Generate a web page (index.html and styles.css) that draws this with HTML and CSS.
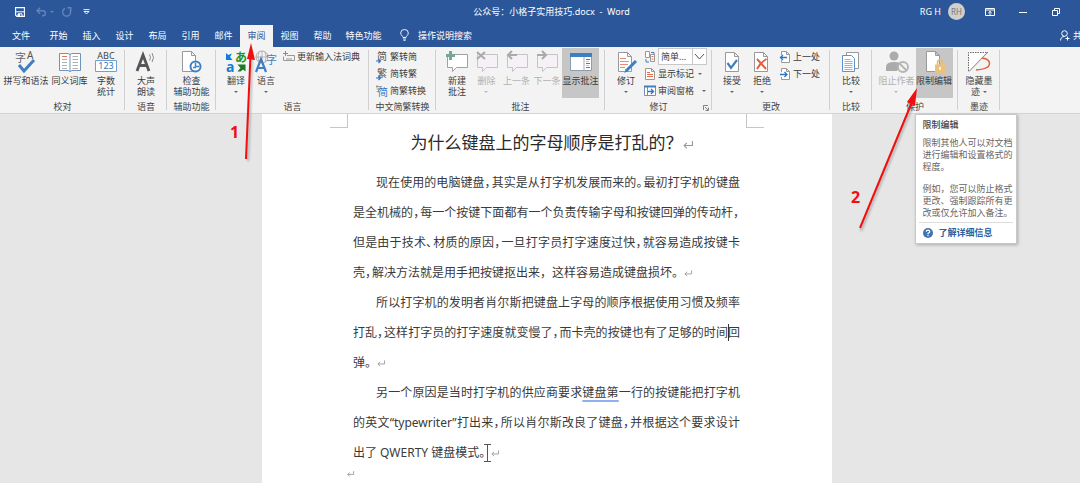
FILE: index.html
```html
<!DOCTYPE html>
<html lang="zh-CN">
<head>
<meta charset="utf-8">
<title>公众号：小格子实用技巧.docx - Word</title>
<link rel="stylesheet" href="styles.css">
</head>
<body>
<header class="titlebar">
  <div class="quick">
    <button class="plain q-save" aria-label="保存"><svg width="10" height="10" viewBox="0 0 10 10"><path d="M.6.6h8.8v8.8H2L.6 8.2z" fill="none" stroke="#fff" stroke-width="1.1"/><path d="M1 4.8h8M3 9.400V6.800h4v2.600" fill="none" stroke="#fff"/><path d="M3 7h2v2.500H3z" fill="#fff"/></svg></button>
    <button class="plain q-undo" aria-label="撤消"><svg width="18" height="10" viewBox="0 0 18 10"><path d="M4 .8 1 3.800l3 3M1.200 3.800H7c3.200 0 3.200 5 0 5H6" fill="none" stroke="#6583b8" stroke-width="1.400"/><path d="M14 4h4l-2 2z" fill="#6583b8"/></svg></button>
    <button class="plain q-redo" aria-label="恢复"><svg width="10" height="10" viewBox="0 0 10 10"><path d="M3 1.500a4 4 0 1 0 5 1.500M5.500.8h3.300v3.200" fill="none" stroke="#6583b8" stroke-width="1.400"/></svg></button>
    <button class="plain" aria-label="自定义快速访问工具栏"><svg width="7" height="6" viewBox="0 0 7 6"><path d="M.5.6h6M1 2.500h5L3.500 5z" fill="none" stroke="#fff" stroke-width=".9"/></svg></button>
  </div>
  <div class="doc-title">公众号：小格子实用技巧.docx&nbsp; -&nbsp; Word</div>
  <div class="window">
    <span class="user">RG H</span>
    <span class="avatar">RH</span>
    <button class="plain w-ribbon" aria-label="功能区显示选项"><svg width="10" height="8" viewBox="0 0 10 8"><path d="M.5.5h9v7h-9zM.5 2h9M5 7V3.600M3.300 5 5 3.400 6.700 5" fill="none" stroke="#fff"/></svg></button>
    <button class="plain w-min" aria-label="最小化"><svg width="8" height="8" viewBox="0 0 8 8"><path d="M0 4.500h8" stroke="#fff"/></svg></button>
    <button class="plain" aria-label="向下还原"><svg width="8" height="8" viewBox="0 0 8 8"><path d="M.5 2.500h5v5h-5zM2.500 2.500v-2h5v5h-2" fill="none" stroke="#fff"/></svg></button>
  </div>
</header>
<nav class="tabs">
  <button class="tab file">文件</button>
  <button class="tab">开始</button>
  <button class="tab">插入</button>
  <button class="tab">设计</button>
  <button class="tab">布局</button>
  <button class="tab">引用</button>
  <button class="tab">邮件</button>
  <button class="tab current">审阅</button>
  <button class="tab">视图</button>
  <button class="tab">帮助</button>
  <button class="tab wide">特色功能</button>
  <button class="tab search"><svg width="9" height="12" viewBox="0 0 9 12"><path d="M3 8.500C3 7 .7 6.300.7 4a3.800 3.500 0 0 1 7.600 0C8.300 6.300 6 7 6 8.500zM3 10h3M3.500 11.400h2" fill="none" stroke="#fff" stroke-width=".9"/></svg>操作说明搜索</button>
  <button class="tab share"><svg width="10" height="11" viewBox="0 0 10 11"><circle cx="4.500" cy="3.500" r="2.800" fill="none" stroke="#fff"/><path d="M.6 10.500C.6 8 2 6.500 4.300 6.500M7.500 6.500v4M5.500 8.500h4" fill="none" stroke="#fff"/></svg>共享</button>
</nav>

<section class="ribbon">
  <div class="group g-proof">
    <div class="tools">
      <button class="big w46"><svg width="22" height="22" viewBox="0 0 22 22"><text x="0" y="11" font-size="11" fill="#666">字</text><text x="12" y="8" font-size="10" fill="#555">A</text><path d="m4 14 5 6L19 9" fill="none" stroke="#3f7fc1" stroke-width="3"/></svg><span>拼写和语法</span></button>
      <button class="big w37"><svg width="22" height="22" viewBox="0 0 22 22"><path d="M.5 2.500H9l2 1 2-1h8.500v17H13l-2 1-2-1H.5z" fill="#fff" stroke="#6f93bd"/><path d="M11 3.500v17" stroke="#6f93bd"/><path d="M3 5.500h5" stroke="#e8765a"/><path d="M3 8.500h5M3 11.500h5M3 14.500h5M3 17.500h5M13.500 5.500H19M13.500 8.500H19M13.500 11.500H19M13.500 14.500H19M13.500 17.500H19" stroke="#b0b0b0"/></svg><span>同义词库</span></button>
      <button class="big w32"><svg width="22" height="22" viewBox="0 0 22 22"><text x="11" y="8" font-size="9" text-anchor="middle" fill="#444">ABC</text><path d="M.5 9.500h21v11H.5z" fill="#fff" stroke="#6fa0d4"/><text x="11" y="18" font-size="9" text-anchor="middle" fill="#2f75b5">123</text></svg><span>字数<br>统计</span></button>
    </div>
    <div class="caption">校对</div>
  </div>
  <div class="group g-speech">
    <div class="tools">
      <button class="big w36"><svg width="22" height="22" viewBox="0 0 22 22"><path d="M2 20 8 4l6 16M4.500 14.500h7" fill="none" stroke="#555" stroke-width="2.800"/><path d="M14.500 3.500q2 3 0 6M17 2q3 4.500 0 9" fill="none" stroke="#888"/></svg><span>大声<br>朗读</span></button>
    </div>
    <div class="caption">语音</div>
  </div>
  <div class="group g-access">
    <div class="tools">
      <button class="big w40"><svg width="22" height="22" viewBox="0 0 22 22"><path d="M1.500.5h9l4 4v16h-13zM10.500.5v4h4" fill="#fff" stroke="#999"/><circle cx="14.500" cy="15.500" r="5" fill="#fff" stroke="#3f7fc1" stroke-width="2"/><path d="M14.500 15.500V12m0 3.500h3.500m-6 1h3" stroke="#3f7fc1" stroke-width="1.500"/></svg><span>检查<br>辅助功能</span></button>
    </div>
    <div class="caption">辅助功能</div>
  </div>
  <div class="group g-lang">
    <div class="tools">
      <button class="big w30"><svg width="22" height="22" viewBox="0 0 22 22"><text x="10" y="11" font-size="12" font-weight="700" fill="#1c9227">あ</text><text x="1" y="21" font-size="14" font-weight="700" fill="#0e7fd8">a</text><path d="M1 9V2l2.200 2L7 2.500 5 6l2.500 3z" fill="#0e7fd8"/><path d="M12.500 13.500h8v7l-2.500-2-2.500 2-3 0 3-3.500z" fill="#1c7a27"/></svg><span>翻译<i class="arrow"></i></span></button>
      <button class="big w30"><svg width="22" height="22" viewBox="0 0 22 22"><circle cx="7" cy="6" r="6" fill="none" stroke="#aaa"/><path d="M1 6h12M7 0v12M4 1q-2 5 0 10M10 1q2 5 0 10" fill="none" stroke="#aaa" stroke-width=".8"/><path d="m1 21 5-13 5 13M3 17h6" fill="none" stroke="#3f7fc1" stroke-width="2.200"/><text x="11" y="13" font-size="11" fill="#3f7fc1">字</text></svg><span>语言<i class="arrow"></i></span></button>
      <div class="rows">
        <button class="small"><svg width="12" height="12" viewBox="0 0 12 12"><path d="M4 4.500h7.500v5H.5v-4M3 8h6" fill="none" stroke="#999"/><path d="M2.500 0v5M0 2.500h5" stroke="#5b9f86"/></svg>更新输入法词典</button>
      </div>
    </div>
    <div class="caption">语言</div>
  </div>
  <div class="group g-chinese">
    <div class="tools">
      <div class="rows">
        <button class="small"><svg width="12" height="12" viewBox="0 0 12 12"><text x="1" y="9" font-size="10" fill="#555">简</text><path d="M0 10h4M2.500 8l2 2-2 2" fill="none" stroke="#2f75c5" stroke-width="1.200"/></svg>繁转简</button>
        <button class="small"><svg width="12" height="12" viewBox="0 0 12 12"><text x="1" y="9" font-size="10" fill="#555">繁</text><path d="M0 10h4M2.500 8l2 2-2 2" fill="none" stroke="#2f75c5" stroke-width="1.200"/></svg>简转繁</button>
        <button class="small"><svg width="12" height="12" viewBox="0 0 12 12"><path d="M0 1.500h6M1 0v3M.5 4h4M2.500 3.500v4M.5 6.500h3" fill="none" stroke="#888" stroke-width=".8"/><text x="2" y="11" font-size="10" fill="#2f75c5">简</text></svg>简繁转换</button>
      </div>
    </div>
    <div class="caption">中文简繁转换</div>
  </div>
  <div class="group g-comment">
    <div class="tools">
      <button class="big w30"><svg width="22" height="22" viewBox="0 0 22 22"><path d="M1.500 3.500h20v13h-11L6.500 20.500v-4h-5z" fill="#fff" stroke="#a0a0a0"/><path d="M4.500 0v9M0 4.500h9" stroke="#74a893" stroke-width="3"/></svg><span>新建<br>批注</span></button>
      <button class="big w29" disabled><svg width="22" height="22" viewBox="0 0 22 22"><path d="M1.500 3.500h20v13h-11L6.500 20.500v-4h-5z" fill="#f6f1f6" stroke="#c6c2c6"/><path d="m1 1 8 7M9 1 1 8" stroke="#aaa" stroke-width="2"/></svg><span>删除<i class="arrow"></i></span></button>
      <button class="big w31" disabled><svg width="22" height="22" viewBox="0 0 22 22"><path d="M1.500 3.500h20v13h-11L6.500 20.500v-4h-5z" fill="#f6f1f6" stroke="#c6c2c6"/><path d="M11 4H2M6 0 2 4l4 4" fill="none" stroke="#aaa" stroke-width="2"/></svg><span>上一条</span></button>
      <button class="big w30" disabled><svg width="22" height="22" viewBox="0 0 22 22"><path d="M1.500 3.500h20v13h-11L6.500 20.500v-4h-5z" fill="#f6f1f6" stroke="#c6c2c6"/><path d="M1 4h9M6 0l4 4-4 4" fill="none" stroke="#aaa" stroke-width="2"/></svg><span>下一条</span></button>
      <button class="big w37 pressed"><svg width="22" height="22" viewBox="0 0 22 22"><path d="M.5 2.500h21v17H.5z" fill="#fff" stroke="#8b9bb0"/><path d="M0 2h22v4H0z" fill="#3f7fc1"/><path d="M14 6v14" stroke="#aaa"/><path d="M16 8.500h4M16 12.500h4M16 16.500h4" stroke="#3f7fc1"/><path d="M16 10.500h3M16 14.500h3" stroke="#aac6e4"/></svg><span>显示批注</span></button>
    </div>
    <div class="caption">批注</div>
  </div>
  <div class="group g-track">
    <div class="tools">
      <button class="big w32"><svg width="22" height="22" viewBox="0 0 22 22"><path d="M3.500 1.500h9l4 4v15h-13zM12.500 1.500v4h4" fill="#fff" stroke="#999"/><path d="M5 7.500h6M5 10.500h9M5 13.500h8M5 16.500h5" stroke="#eb8b6f"/><path d="M21 10 11 20" stroke="#3f7fc1" stroke-width="3"/><path d="m11 18-2 4 4-2z" fill="#3f7fc1"/></svg><span>修订<i class="arrow"></i></span></button>
      <div class="rows">
        <div class="small pick"><svg width="12" height="12" viewBox="0 0 12 12"><path d="M1.500.5h4v6h-4zM6.500 3.500h4v7h-4z" fill="#fff" stroke="#999"/><path d="M7.500 5.500h2M7.500 8h2" stroke="#e66a4c"/><path d="M2 8v3h3M7 1.500h3v2" fill="none" stroke="#3f7fc1"/></svg>
          <span class="combo"><select aria-label="显示以供审阅"><option>简单...</option></select><svg class="chevron" width="15" height="15" viewBox="0 0 15 15"><path d="M.5 0v15" stroke="#c8c8c8"/><path d="M3 5l4.500 5L12 5" fill="none" stroke="#555"/></svg></span></div>
        <button class="small"><svg width="12" height="12" viewBox="0 0 12 12"><path d="M1.500.5h6l3 3v8h-9zM7.500.5v3h3" fill="#fff" stroke="#999"/><path d="M3 4.500h3M3 6.500h6M3 8.500h6" stroke="#e66a4c"/></svg>显示标记<i class="arrow"></i></button>
        <button class="small"><svg width="12" height="12" viewBox="0 0 12 12"><path d="M.5 1.500h11v9H.5z" fill="#fff" stroke="#7890ad"/><path d="M0 1.500h12" stroke="#3f7fc1" stroke-width="2"/><path d="M3.500 2v8" stroke="#888"/><path d="M4 6.500h5M7 4l2.500 2.500L7 9" fill="none" stroke="#2f75c5" stroke-width="1.300"/></svg>审阅窗格<i class="arrow far"></i></button>
      </div>
    </div>
    <div class="caption"><span>修订</span><button class="plain launcher" aria-label="修订选项"><svg width="6" height="6" viewBox="0 0 6 6"><path d="M.5 5V.5H5M2 2l3 3M5.500 2.500v3h-3" fill="none" stroke="#777" stroke-width=".9"/></svg></button></div>
  </div>
  <div class="group g-change">
    <div class="tools">
      <button class="big w30"><svg width="22" height="22" viewBox="0 0 22 22"><path d="M4.500 1.500h9l4 4v15h-13zM13.500 1.500v4h4" fill="#fff" stroke="#999"/><path d="m6.500 12 3.500 5 6-8" fill="none" stroke="#3f7fc1" stroke-width="2.200"/></svg><span>接受<i class="arrow"></i></span></button>
      <button class="big w30"><svg width="22" height="22" viewBox="0 0 22 22"><path d="M3.500 1.500h9l4 4v15h-13zM12.500 1.500v4h4" fill="#fff" stroke="#999"/><path d="m6 8 9 10M15.500 8Q9 12 6 18" fill="none" stroke="#e2603f" stroke-width="2"/></svg><span>拒绝<i class="arrow"></i></span></button>
      <div class="rows">
        <button class="small"><svg width="12" height="12" viewBox="0 0 12 12"><path d="M2.500 4V.5h5l3 3v8h-8V9M7.500.5v3h3" fill="#fff" stroke="#999"/><path d="M8 6.500H1M4 4 1.500 6.500 4 9" fill="none" stroke="#2f75c5" stroke-width="1.300"/></svg>上一处</button>
        <button class="small"><svg width="12" height="12" viewBox="0 0 12 12"><path d="M2.500 4V.5h5l3 3v8h-8V9M7.500.5v3h3" fill="#fff" stroke="#999"/><path d="M1 6.500h7M5.500 4 8 6.500 5.500 9" fill="none" stroke="#2f75c5" stroke-width="1.300"/></svg>下一处</button>
      </div>
    </div>
    <div class="caption">更改</div>
  </div>
  <div class="group g-compare">
    <div class="tools">
      <button class="big w32"><svg width="22" height="22" viewBox="0 0 22 22"><path d="M6.500 1.500h12v16h-12z" fill="#fff" stroke="#999"/><path d="M2.500 4.500h9l3 3v13h-12z" fill="#fff" stroke="#5b93cf"/><path d="M4.500 8.500h6M4.500 10.500h8M4.500 12.500h8M4.500 14.500h8M4.500 16.500h8M4.500 18.500h8" stroke="#8fb5de"/></svg><span>比较<i class="arrow"></i></span></button>
    </div>
    <div class="caption">比较</div>
  </div>
  <div class="group g-protect">
    <div class="tools">
      <button class="big w38" disabled><svg width="24" height="22" viewBox="0 0 24 22"><circle cx="9" cy="5" r="4.500" fill="#ababab"/><path d="M1 20v-4q0-5 8-5t7 3l-4 6z" fill="#ababab"/><circle cx="18" cy="16" r="5" fill="#f3f3f3" stroke="#b4b4b4" stroke-width="1.800"/><path d="m14.500 12.500 7 7" stroke="#b4b4b4" stroke-width="1.800"/></svg><span>阻止作者<i class="arrow"></i></span></button>
      <div class="anchor">
        <button class="big w37 pressed" aria-describedby="tip"><svg width="22" height="22" viewBox="0 0 22 22"><path d="M3.500.5h9l4 4v16h-13zM12.500.5v4h4" fill="#fff" stroke="#999"/><path d="M14.500 14v-2.500a2.500 2.500 0 0 1 5 0V14" fill="none" stroke="#e3bd78" stroke-width="1.600"/><path d="M12 13.500h10V22H12z" fill="#ecc27a"/><path d="M17 16v3" stroke="#fff" stroke-width="1.500"/></svg><span>限制编辑</span></button>
        <aside class="tooltip" id="tip">
          <h2>限制编辑</h2>
          <p>限制其他人可以对文档<br>进行编辑和设置格式的<br>程度。</p>
          <p>例如，您可以防止格式<br>更改、强制跟踪所有更<br>改或仅允许加入备注。</p>
          <a href="#"><svg width="10" height="10" viewBox="0 0 10 10"><circle cx="5" cy="5" r="5" fill="#3f73b0"/><path d="M3.200 3.800Q3.300 2.200 5 2.200t1.800 1.500Q6.800 4.500 5 5.400V6.200M5 7v1.200" fill="none" stroke="#fff" stroke-width="1.200"/></svg>了解详细信息</a>
        </aside>
      </div>
    </div>
    <div class="caption">保护</div>
  </div>
  <div class="group g-ink">
    <div class="tools">
      <button class="big w32"><svg width="22" height="22" viewBox="0 0 22 22"><path d="M.5.5h18L.5 20z" fill="#fff"/><path d="M.5 20V1.500h19" fill="none" stroke="#666" stroke-dasharray="1.500 1"/><path d="M20 1 1 20.500" stroke="#888"/><path d="M14 7q8 1 7.500 6T8 19" fill="none" stroke="#e2603f" stroke-width="1.500"/></svg><span>隐藏墨<br>迹<i class="arrow side"></i></span></button>
    </div>
    <div class="caption">墨迹</div>
  </div>
</section>

<main class="canvas">
  <article class="page">
    <div class="crop"><i class="crop-left"></i><i class="crop-right"></i></div>
    <div class="text">
      <h1>为什么键盘上的字母顺序是打乱的？<svg class="mark large" viewBox="0 0 9 7"><path d="M8.500 0v4H1M3.500 1.500 1 4l2.500 2.500" fill="none" stroke="#999"/></svg></h1>
      <p>
        <span class="line first">现在使用的电脑键盘<b>，</b>其实是从打字机发展而来的<b>。</b>最初打字机的键盘</span>
        <span class="line">是全机械的<b>，</b>每一个按键下面都有一个负责传输字母和按键回弹的传动杆<b>，</b></span>
        <span class="line">但是由于技术<b>、</b>材质的原因<b>，</b>一旦打字员打字速度过快<b>，</b>就容易造成按键卡</span>
        <span class="line last">壳<b>，</b>解决方法就是用手把按键抠出来，这样容易造成键盘损坏。<svg class="mark" viewBox="0 0 9 7"><path d="M8.500 0v4H1M3.500 1.500 1 4l2.500 2.500" fill="none" stroke="#999"/></svg></span>
      </p>
      <p>
        <span class="line first">所以打字机的发明者肖尔斯把键盘上字母的顺序根据使用习惯及频率</span>
        <span class="line">打乱<b>，</b>这样打字员的打字速度就变慢了<b>，</b>而卡壳的按键也有了足够的时间<i class="caret"></i>回</span>
        <span class="line last">弹。<svg class="mark" viewBox="0 0 9 7"><path d="M8.500 0v4H1M3.500 1.500 1 4l2.500 2.500" fill="none" stroke="#999"/></svg></span>
      </p>
      <p>
        <span class="line first">另一个原因是当时打字机的供应商要求<u>键盘第</u>一行的按键能把打字机</span>
        <span class="line">的英文“typewriter”打出来<b>，</b>所以肖尔斯改良了键盘<b>，</b>并根据这个要求设计</span>
        <span class="line last">出了 QWERTY 键盘模式。<i class="ibeam"><svg width="7" height="18" viewBox="0 0 7 18"><path d="M0 .5h7M0 17.500h7M3.500.5v17" stroke="#555"/></svg></i><svg class="mark" viewBox="0 0 9 7"><path d="M8.500 0v4H1M3.500 1.500 1 4l2.500 2.500" fill="none" stroke="#999"/></svg></span>
      </p>
    </div>
    <div class="end"><svg width="7" height="6" viewBox="0 0 9 7"><path d="M8.500 0v4H1M3.500 1.500 1 4l2.500 2.500" fill="none" stroke="#888"/></svg></div>
  </article>
</main>

<svg class="notes" width="1080" height="300" viewBox="0 0 1080 300">
  <g class="shade" stroke="#888" fill="#888"><path d="m248 161 4-103" stroke-width="2"/><path d="m861 231 52-126" stroke-width="2"/></g>
  <path d="m246 159 4.500-104" stroke="#f00f0f" stroke-width="2"/><path d="m251 43 4 17-8-1z" fill="#f00f0f"/>
  <path d="m860 228 52-126" stroke="#f00f0f" stroke-width="2"/><path d="m917 88-2 18-8-4z" fill="#f00f0f"/>
  <text x="230" y="138">1</text><text x="851" y="203">2</text>
</svg>
</body>
</html>
```

FILE: styles.css
```css
* { box-sizing: border-box; }
body {
  margin: 0;
  min-height: 100vh;
  display: flex;
  flex-direction: column;
  overflow: hidden;
  background: #e6e6e6;
  color: #3c3c3c;
  font: 9px/11px "Noto Sans", "Noto Sans CJK SC", sans-serif;
}
button, select { font: inherit; color: inherit; margin: 0; padding: 0; border: 0; background: none; }
svg { flex: none; display: block; overflow: visible; }
i { font-style: normal; }

.titlebar {
  display: grid;
  grid-template-columns: 1fr auto 1fr;
  align-items: center;
  height: 25px;
  padding: 0 20px 2px 15px;
  background: #2b579a;
  color: #fff;
}
.quick, .window { display: flex; align-items: center; }
.window { justify-content: flex-end; }
.q-save { margin-right: 11px; }
.q-undo { margin-right: 8px; }
.q-redo { margin-right: 11px; }
.doc-title { padding-left: 28px; }
.user { margin-right: 7px; }
.avatar {
  width: 17px;
  height: 17px;
  margin-right: 20px;
  border-radius: 50%;
  background: #d0cfce;
  color: #777;
  font-size: 8px;
  line-height: 17px;
  text-align: center;
}
.w-ribbon { margin-right: 24px; }
.w-min { margin-right: 25px; }

.tabs { display: flex; height: 22px; overflow: hidden; background: #2b579a; color: #fff; }
.tab { flex: none; width: 33px; padding-bottom: 2px; white-space: nowrap; }
.file { width: 42px; }
.wide { width: 49px; }
.current { background: #f3f3f3; color: #2b579a; }
.search, .share { display: flex; align-items: center; width: auto; }
.search { gap: 9px; margin-left: 12px; }
.share { gap: 3px; margin-left: auto; margin-right: -11px; }

.ribbon {
  display: flex;
  height: 67px;
  padding: 1px 0 0;
  background: #f3f3f3;
  border-bottom: 1px solid #d4d4d4;
}
.group { flex: none; position: relative; display: flex; flex-direction: column; justify-content: space-between; }
.group::after { content: ""; position: absolute; right: 0; top: 2px; bottom: 3px; width: 1px; background: #d0d0d0; }
.tools { display: flex; justify-content: center; }
.caption { height: 12px; text-align: center; color: #444; position: relative; }
.launcher { position: absolute; right: 3px; top: 4px; }
.g-proof { width: 125px; }
.g-proof .tools { gap: 2px; }
.g-speech { width: 42px; }
.g-access { width: 49px; }
.g-lang { width: 153px; }
.g-chinese { width: 67px; }
.g-comment { width: 169px; }
.g-track { width: 107px; }
.g-change { width: 118px; }
.g-compare { width: 42px; }
.g-protect { width: 86px; }
.g-ink { width: 42px; }
.g-lang .tools, .g-track .tools, .g-change .tools, .g-chinese .tools { justify-content: flex-start; padding-left: 5px; }

.big {
  display: flex;
  flex: none;
  flex-direction: column;
  align-items: center;
  gap: 2px;
  height: 50px;
  padding-top: 3px;
  white-space: nowrap;
}
.big:disabled { color: #b1b1b1; }
.pressed { background: #c6c6c6; }
.w29 { width: 29px; }
.w30 { width: 30px; }
.w31 { width: 31px; }
.w32 { width: 32px; }
.w36 { width: 36px; }
.w37 { width: 37px; }
.w38 { width: 38px; }
.w40 { width: 40px; }
.w46 { width: 46px; }
.arrow { display: block; width: 4px; margin: 5px auto 0; border: 2px solid transparent; border-top-color: #666; border-bottom: 0; }
.big:disabled .arrow { border-top-color: #b9b9b9; }
.small .arrow { margin: 0 0 0 2px; }
.small .far { margin-left: 6px; }
.big .side { display: inline-block; margin: 0 0 2px 3px; }

.rows { display: flex; flex-direction: column; padding-left: 2px; }
.small { display: flex; align-items: center; gap: 2px; height: 17px; white-space: nowrap; }
.combo { position: relative; width: 49px; height: 17px; }
.combo select { appearance: none; width: 100%; height: 100%; padding: 0 0 0 2px; border: 1px solid #c8c8c8; background: #fff; }
.chevron { position: absolute; right: 0; top: 1px; pointer-events: none; }

.anchor { position: relative; }
.tooltip {
  position: absolute;
  z-index: 2;
  top: 66px;
  left: -1px;
  width: 102px;
  padding: 4px 3px 2px 7px;
  border: 1px solid #c8c8c8;
  background: #fff;
  box-shadow: 1px 1px 3px #aaa;
  color: #666;
  line-height: 12px;
  white-space: nowrap;
}
.tooltip h2 { margin: 0 0 6px; font-size: 9px; font-weight: 500; color: #444; }
.tooltip p { margin: 0 0 10px; }
.tooltip p + p { margin-bottom: 3px; }
.tooltip a {
  display: flex;
  align-items: center;
  gap: 6px;
  margin-left: -4px;
  padding: 4px 0 2px 4px;
  border-top: 1px solid #ddd;
  color: #2b5f9e;
  font-weight: 700;
  text-decoration: none;
}

.canvas { flex: 1; display: flex; justify-content: center; padding-left: 14px; }
.page { width: 570px; background: #fff; }
.crop { display: flex; justify-content: space-between; height: 14px; padding: 0 68px; }
.crop i { width: 18px; border-bottom: 1px solid #c6c6c6; }
.crop .crop-left { border-right: 1px solid #c6c6c6; }
.crop .crop-right { border-left: 1px solid #c6c6c6; }
.text { padding: 0 92px 0 91px; font-size: 12px; line-height: 30px; color: #3a3a3a; }
h1 { margin: 0 0 10px; padding-left: 10px; font-size: 17px; font-weight: 400; line-height: 30px; text-align: center; white-space: nowrap; color: #2a2a2a; }
.text p { margin: 0; }
.line { display: block; height: 30px; white-space: nowrap; text-align-last: justify; }
.first { padding-left: 23px; }
.last { text-align-last: left; }
.line b { margin-right: 1px; font-weight: 400; font-feature-settings: "halt"; }
.line u { text-decoration: underline 2px #8eb0f0; text-underline-offset: 3px; }
.mark { display: inline-block; width: 8px; height: 7px; }
.large { width: 10px; height: 8px; }
.caret, .ibeam { position: relative; }
.caret::after { content: ""; position: absolute; left: 0; top: 0; width: 1px; height: 17px; background: #333; }
.ibeam svg { position: absolute; right: 0; top: 0; }
.end { padding-left: 85px; padding-top: 3px; }

.notes { position: absolute; z-index: 3; left: 0; top: 0; pointer-events: none; }
.shade { opacity: .6; filter: blur(1px); }
.notes text { fill: #f00f0f; font-size: 16px; font-weight: 700; }
```
